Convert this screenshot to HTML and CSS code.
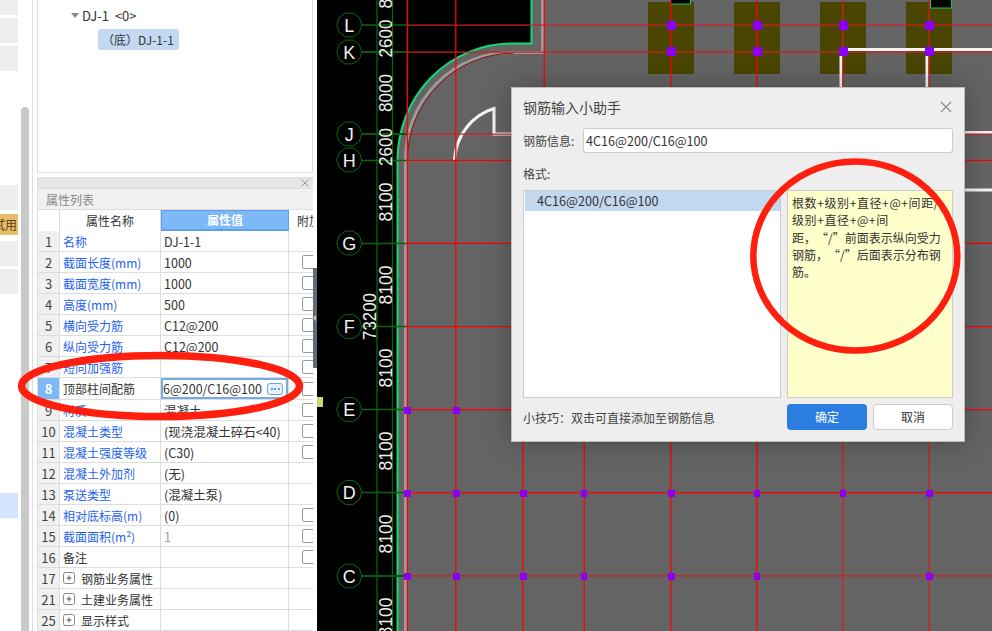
FILE: index.html
```html
<!DOCTYPE html>
<html lang="zh-CN">
<head>
<meta charset="utf-8">
<title>钢筋输入小助手</title>
<link rel="stylesheet" href="styles.css">
</head>
<body>
<div class="app">
  <div class="rail">
    <div class="rail-item rail-a"></div>
    <div class="rail-item rail-b"></div>
    <div class="rail-item rail-b"></div>
    <div class="rail-item rail-c"></div>
    <div class="rail-item rail-trial"><span>试用</span></div>
    <div class="rail-item rail-d"></div>
    <div class="rail-item rail-b"></div>
    <div class="rail-item rail-active"></div>
  </div>
  <div class="scroll"><div class="scroll-thumb"></div></div>
  <div class="divider"></div>
  <div class="main">
    <div class="tree">
      <div class="tree-parent"><span class="tri"></span>DJ-1&nbsp;&nbsp;&lt;0&gt;</div>
      <div class="tree-child">（底）DJ-1-1</div>
    </div>
    <div class="props">
      <div class="props-bar"><svg class="bar-x" width="8" height="8" viewBox="0 0 8 8"><path d="M.5.5l7 7M7.5.5l-7 7"/></svg></div>
      <div class="props-title">属性列表</div>
      <table class="grid">
        <colgroup><col class="c-i"><col class="c-n"><col class="c-v"><col class="c-e"></colgroup>
        <tr class="head"><th class="idx"></th><th>属性名称</th><th class="th-on">属性值</th><th class="th-e">附加</th></tr>
        <tr><td class="idx">1</td><td class="nm">名称</td><td class="val">DJ-1-1</td><td></td></tr>
        <tr><td class="idx">2</td><td class="nm">截面长度(mm)</td><td class="val">1000</td><td class="ck"><i></i></td></tr>
        <tr><td class="idx">3</td><td class="nm">截面宽度(mm)</td><td class="val">1000</td><td class="ck"><i></i></td></tr>
        <tr><td class="idx">4</td><td class="nm">高度(mm)</td><td class="val">500</td><td class="ck"><i></i></td></tr>
        <tr><td class="idx">5</td><td class="nm">横向受力筋</td><td class="val">C12@200</td><td class="ck"><i></i></td></tr>
        <tr><td class="idx">6</td><td class="nm">纵向受力筋</td><td class="val">C12@200</td><td class="ck"><i></i></td></tr>
        <tr><td class="idx">7</td><td class="nm">短向加强筋</td><td class="val"></td><td class="ck"><i></i></td></tr>
        <tr><td class="idx idx-on">8</td><td class="blk">顶部柱间配筋</td><td class="edit"><div class="edit-box"><span class="edit-text">6@200/C16@100</span><span class="dots"><b></b><b></b><b></b></span></div></td><td class="ck"><i></i></td></tr>
        <tr><td class="idx">9</td><td class="nm">材质</td><td class="val">混凝土</td><td class="ck"><i></i></td></tr>
        <tr><td class="idx">10</td><td class="nm">混凝土类型</td><td class="val">(现浇混凝土碎石&lt;40)</td><td class="ck"><i></i></td></tr>
        <tr><td class="idx">11</td><td class="nm">混凝土强度等级</td><td class="val">(C30)</td><td class="ck"><i></i></td></tr>
        <tr><td class="idx">12</td><td class="nm">混凝土外加剂</td><td class="val">(无)</td><td></td></tr>
        <tr><td class="idx">13</td><td class="nm">泵送类型</td><td class="val">(混凝土泵)</td><td></td></tr>
        <tr><td class="idx">14</td><td class="nm">相对底标高(m)</td><td class="val">(0)</td><td class="ck"><i></i></td></tr>
        <tr><td class="idx">15</td><td class="nm">截面面积(m²)</td><td class="val val-calc">1</td><td class="ck"><i></i></td></tr>
        <tr><td class="idx">16</td><td class="blk">备注</td><td class="val"></td><td class="ck"><i></i></td></tr>
        <tr><td class="idx">17</td><td class="blk"><span class="group"><svg class="plus" width="12" height="12" viewBox="0 0 12 12"><rect x=".5" y=".5" width="11" height="11" rx="2"/><path d="M3.5 6h5M6 3.5v5"/></svg>钢筋业务属性</span></td><td class="val"></td><td></td></tr>
        <tr><td class="idx">21</td><td class="blk"><span class="group"><svg class="plus" width="12" height="12" viewBox="0 0 12 12"><rect x=".5" y=".5" width="11" height="11" rx="2"/><path d="M3.5 6h5M6 3.5v5"/></svg>土建业务属性</span></td><td class="val"></td><td></td></tr>
        <tr><td class="idx">25</td><td class="blk"><span class="group"><svg class="plus" width="12" height="12" viewBox="0 0 12 12"><rect x=".5" y=".5" width="11" height="11" rx="2"/><path d="M3.5 6h5M6 3.5v5"/></svg>显示样式</span></td><td class="val"></td><td></td></tr>
      </table>
    </div>
  </div>
  <div class="splitter"><div class="split-handle"><span class="split-tri"></span></div></div>

  <svg class="canvas" width="675" height="631" viewBox="317 0 675 631">
    <defs>
      <polygon id="bubble" points="12.5,0 10.1,7.3 3.9,11.9 -3.9,11.9 -10.1,7.3 -12.5,0 -10.1,-7.3 -3.9,-11.9 3.9,-11.9 10.1,-7.3"/>
    </defs>
    <rect x="317" y="0" width="675" height="631" fill="#000"/>
    <path class="floor" d="M397.500 631V160A114 117 0 0 1 511 43.500H531.500V0H992V631Z"/>

    <g class="olive">
      <rect x="648" y="2" width="46" height="72"/><rect x="734" y="2" width="46" height="72"/>
      <rect x="820" y="2" width="46" height="72"/><rect x="906" y="2" width="46" height="72"/>
    </g>
    <rect class="pit" x="670.500" y="-3" width="20" height="7"/>
    <rect class="pit" x="930.500" y="-3" width="21" height="11"/>

    <path class="band" d="M405.500 631V160A105 107 0 0 1 511 52.500H542.500V0"/>
    <path class="edge" d="M397.500 631V160A114 117 0 0 1 511 43.500H531.500V0"/>
    <path class="arc" d="M407.500 160A107 107 0 0 1 514 53"/>

    <g class="walls">
      <path d="M454.500 160C456 134 473 115 494 108.500V134H515"/>
      <path d="M847 49.500H992M841 55V90M927 55V90M960 132.500H992M960 190H992"/>
    </g>

    <g class="grid-lines">
      <path class="g" d="M377 0V631M392.500 0V631"/>
      <path class="g" d="M361 25H407M361 243.500H407M361 326.500H407M361 409.500H407M361 492.500H407M361 160.500H407"/>
      <path class="g g2" d="M361 52H407M361 134H407M361 576H407"/>
      <path class="r" d="M407.400 0V631M455.800 0V631M544.300 0V90M670.800 0V631M756.800 0V631M522.800 440V631M584.300 440V631"/>
      <path class="d" d="M842.800 0V631M929 0V631"/>
      <path class="d" d="M407 25.200H992M407 52.200H992M407 134.200H992M407 575.800H992"/>
      <path class="r" d="M407 160.400H992M407 243.300H992M407 326.700H992M407 409.700H992M407 492.700H992"/>
    </g>

    <g class="pts-a">
      <rect x="666.500" y="20.500" width="9" height="9"/><rect x="666.500" y="46.500" width="9" height="9"/>
      <rect x="752.500" y="20.500" width="9" height="9"/><rect x="752.500" y="46.500" width="9" height="9"/>
      <rect x="838.500" y="20.500" width="9" height="9"/><rect x="838.500" y="46.500" width="9" height="9"/>
      <rect x="924.500" y="20.500" width="9" height="9"/><rect x="924.500" y="46.500" width="9" height="9"/>
    </g>
    <g class="pts-a">
      <rect x="404" y="406.500" width="7" height="7"/><rect x="452.500" y="406.500" width="7" height="7"/>
      <rect x="404" y="489.500" width="7" height="7"/><rect x="452.500" y="489.500" width="7" height="7"/>
      <rect x="404" y="572.500" width="7" height="7"/><rect x="452.500" y="572.500" width="7" height="7"/>
      <rect x="519.500" y="489.500" width="7" height="7"/><rect x="581" y="489.500" width="6" height="7"/>
      <rect x="667.500" y="489.500" width="7" height="7"/><rect x="753.500" y="489.500" width="6" height="7"/>
      <rect x="839.500" y="489.500" width="6" height="7"/><rect x="925.500" y="489.500" width="7" height="7"/>
      <rect x="519.500" y="572.500" width="7" height="7"/><rect x="581" y="572.500" width="6" height="7"/>
      <rect x="667.500" y="572.500" width="7" height="7"/><rect x="753.500" y="572.500" width="6" height="7"/>
      <rect x="925.500" y="572.500" width="7" height="7"/>
    </g>

    <g class="bubbles">
      <use href="#bubble" x="349.300" y="25"/><use href="#bubble" x="349.300" y="52"/>
      <use href="#bubble" x="349.300" y="134"/><use href="#bubble" x="349.300" y="160"/>
      <use href="#bubble" x="349.300" y="243"/><use href="#bubble" x="349.300" y="326.500"/>
      <use href="#bubble" x="349.300" y="409.500"/><use href="#bubble" x="349.300" y="492.500"/>
      <use href="#bubble" x="349.300" y="576"/>
    </g>
    <g class="axis-letters">
      <text x="349.300" y="31.500">L</text><text x="349.300" y="58.500">K</text>
      <text x="349.300" y="140.500">J</text><text x="349.300" y="166.500">H</text>
      <text x="349.300" y="249.500">G</text><text x="349.300" y="333">F</text>
      <text x="349.300" y="416">E</text><text x="349.300" y="499">D</text>
      <text x="349.300" y="582.500">C</text>
    </g>
    <g class="dims">
      <text transform="translate(391.500 -11) rotate(-90)" textLength="39" lengthAdjust="spacingAndGlyphs">8100</text>
      <text transform="translate(391.500 38.500) rotate(-90)" textLength="38" lengthAdjust="spacingAndGlyphs">2600</text>
      <text transform="translate(391.500 93) rotate(-90)" textLength="38" lengthAdjust="spacingAndGlyphs">8000</text>
      <text transform="translate(391.500 147) rotate(-90)" textLength="38" lengthAdjust="spacingAndGlyphs">2600</text>
      <text transform="translate(391.500 202) rotate(-90)" textLength="39" lengthAdjust="spacingAndGlyphs">8100</text>
      <text transform="translate(391.500 285) rotate(-90)" textLength="39" lengthAdjust="spacingAndGlyphs">8100</text>
      <text transform="translate(391.500 368) rotate(-90)" textLength="39" lengthAdjust="spacingAndGlyphs">8100</text>
      <text transform="translate(391.500 451) rotate(-90)" textLength="39" lengthAdjust="spacingAndGlyphs">8100</text>
      <text transform="translate(391.500 534) rotate(-90)" textLength="39" lengthAdjust="spacingAndGlyphs">8100</text>
      <text transform="translate(391.500 617) rotate(-90)" textLength="39" lengthAdjust="spacingAndGlyphs">8100</text>
      <text transform="translate(376 316.500) rotate(-90)" textLength="47" lengthAdjust="spacingAndGlyphs">73200</text>
    </g>
  </svg>

  <div class="tab-mark"></div>

  <div class="dialog">
    <div class="dlg-title"><span>钢筋输入小助手</span>
      <svg class="dlg-close" width="12" height="12" viewBox="0 0 12 12"><path d="M1 1l10 10M11 1L1 11"/></svg>
    </div>
    <div class="dlg-row">
      <span class="dlg-label">钢筋信息:</span>
      <div class="dlg-input">4C16@200/C16@100</div>
    </div>
    <div class="dlg-format">格式:</div>
    <div class="dlg-body">
      <div class="dlg-list"><div class="dlg-option">4C16@200/C16@100</div></div>
      <div class="dlg-note"><span class="formula">根数+级别+直径+@+间距/</span><br><span class="formula">级别+直径+@+间</span><br>距，“/”前面表示纵向受力<br>钢筋，“/”后面表示分布钢<br>筋。</div>
    </div>
    <div class="dlg-foot">
      <span class="dlg-tip">小技巧：双击可直接添加至钢筋信息</span>
      <div class="btn btn-ok">确定</div>
      <div class="btn btn-no">取消</div>
    </div>
  </div>

  <svg class="marks" width="992" height="631" viewBox="0 0 992 631">
    <ellipse class="mark-row" cx="160.500" cy="386" rx="139" ry="30.500"/>
    <ellipse class="mark-note" cx="855.300" cy="256" rx="102" ry="94.500"/>
  </svg>
</div>
</body>
</html>
```

FILE: styles.css
```css
* { box-sizing: border-box; }
html, body { margin: 0; padding: 0; }
body { background: #fff; font-family: "Noto Sans CJK SC", "Open Sans", sans-serif; font-size: 12px; color: #333; text-spacing-trim: space-all; }

.app { position: relative; display: flex; width: 992px; height: 631px; overflow: hidden; background: #fff; }

/* left rail */
.rail { width: 18px; flex: none; }
.rail-item { background: #eee; height: 25px; margin-top: 3px; }
.rail-a { height: 15px; margin-top: 0; }
.rail-c { margin-top: 114px; }
.rail-trial { height: 21px; margin-top: 4px; background: #e9bb68; color: #5a3c10; overflow: hidden; position: relative; }
.rail-trial span { display: block; width: 24px; margin-left: -7px; line-height: 21px; white-space: nowrap; }
.rail-d { margin-top: 6px; }
.rail-active { margin-top: 199px; background: #d2e5fc; }

.scroll { width: 8px; margin-left: 3px; padding-top: 107px; flex: none; }
.scroll-thumb { height: 100%; background: #c9c9c9; border-radius: 4px 4px 0 0; }
.divider { width: 1px; margin-left: 3px; background: #ddd; flex: none; }

/* main column */
.main { width: 276px; margin-left: 4px; flex: none; display: flex; flex-direction: column; }
.tree { height: 173px; border: 1px solid #ddd; border-top: 0; padding-top: 5px; flex: none; }
.tree-parent { display: flex; align-items: center; height: 20px; padding-left: 33px; font-size: 13px; color: #333; white-space: nowrap; }
.tri { width: 0; height: 0; margin-right: 3px; border: 4px solid transparent; border-top: 5px solid #888; border-bottom: 0; }
.tree-child { width: 81px; height: 21px; margin: 4px 0 0 60px; padding-left: 4px; border-radius: 3px; background: #c2d9f1; font-size: 12px; line-height: 21px; white-space: nowrap; }

.props { margin-top: 4px; flex: 1; min-height: 0; border-left: 1px solid #ddd; overflow: hidden; }
.props-bar { display: flex; justify-content: flex-end; align-items: center; height: 12px; padding-right: 4px; background: #e6e6e6; border-top: 1px solid #ddd; border-bottom: 1px solid #ddd; }
.bar-x { stroke: #999; stroke-width: 1; fill: none; }
.props-title { height: 21px; padding-left: 8px; background: #f0f0f0; color: #888; font-size: 12px; line-height: 21px; border-bottom: 1px solid #ddd; }

.grid { width: 275px; table-layout: fixed; border-collapse: separate; border-spacing: 0; }
.c-i { width: 22px; } .c-n { width: 101px; } .c-v { width: 128px; } .c-e { width: 24px; }
.grid th, .grid td { height: 21px; padding: 0; border-right: 1px solid #ddd; border-bottom: 1px solid #ddd; white-space: nowrap; overflow: hidden; font-weight: 400; text-align: left; }
.grid .head th { height: 20px; text-align: center; border-bottom: 0; border-right-color: #ddd; line-height: 18px; }
.grid .head .th-on { background: #7db8f7; color: #fff; font-weight: 700; border: 1px solid #5ea0ea; border-bottom-width: 2px; }
.grid .head .th-e { text-align: left; padding-left: 8px; border-right: 0; }
.grid td:last-child { border-right: 0; }
.grid .idx { background: #f0f0f0; color: #444; text-align: center; font-size: 13px; }
.grid .head .idx { background: #fff; }
.grid .idx-on { background: #7db8f7; color: #fff; font-weight: 700; }
.nm { padding-left: 3px !important; color: #1e62f0; }
.blk { padding-left: 3px !important; color: #333; }
.val { padding-left: 3px !important; color: #333; font-size: 12.500px; }
.val-calc { color: #86a6cc; }
.ck { padding-left: 13px !important; }
.ck i { display: block; width: 14px; height: 14px; border: 1px solid #999; border-radius: 2px; background: #fff; }
.grid td.edit { overflow: visible; }
.edit-box { display: flex; align-items: center; justify-content: space-between; height: 21px; padding: 0 3px 0 0; border: 2px solid #74abe3; overflow: hidden; font-size: 12.500px; }
.edit-text { white-space: nowrap; }
.dots { display: flex; align-items: center; justify-content: center; gap: 1.500px; flex: none; width: 16px; height: 12px; border: 1px solid #6fa3dd; border-radius: 3px; background: #e8f1fb; }
.dots b { width: 2px; height: 2px; border-radius: 50%; background: #2b7de0; }
.group { display: flex; align-items: center; }
.plus { flex: none; margin-right: 6px; fill: none; stroke: #888; stroke-width: 1; }
.plus path { stroke: #555; }

/* splitter */
.splitter { width: 4px; flex: none; padding-top: 268px; }
.split-handle { display: flex; align-items: center; height: 100px; background: #5f6a72; }
.split-tri { width: 0; height: 0; border: 3px solid transparent; border-left: 0; border-right: 3px solid #c8ced2; }

/* canvas */
.canvas { flex: none; display: block; margin-left: 0; }
.floor { fill: #646464; }
.olive rect { fill: #4a4500; }
.pit { fill: #000; stroke: #0fc86a; stroke-width: 1; }
.band { fill: none; stroke: #9a9a9a; stroke-width: 3; }
.edge { fill: none; stroke: #0fdc78; stroke-width: 2; }
.arc { fill: none; stroke: #8b1010; stroke-width: 1; }
.walls path { fill: none; stroke: #f4f4f4; stroke-width: 3; }
.grid-lines path { fill: none; stroke-width: 1.300; }
.grid-lines .g { stroke: #0b640b; }
.grid-lines .g2 { stroke: #0a5a0a; stroke-width: 2; }
.grid-lines .r { stroke: #f00; }
.grid-lines .d { stroke: #d02020; }
.pts-a rect { fill: #8a00f5; shape-rendering: crispEdges; }
.bubbles use { fill: #000; stroke: #0b6b0b; stroke-width: 1; }
.axis-letters text { fill: #f0f0f0; font-family: "Liberation Sans", sans-serif; font-size: 18px; text-anchor: middle; }
.dims text { fill: #eee; font-family: "Liberation Sans", sans-serif; font-size: 19px; text-anchor: middle; }

.tab-mark { position: absolute; left: 317px; top: 397px; width: 6px; height: 10px; background: #c6da70; }

/* dialog */
.dialog { position: absolute; left: 511px; top: 87px; width: 454px; height: 355px; display: flex; flex-direction: column; padding: 0 11px; background: #eee; border: 1px solid #bcbcbc; box-shadow: 0 0 26px rgba(0, 0, 0, .3); color: #444; }
.dlg-title { display: flex; align-items: center; justify-content: space-between; height: 40px; padding: 0 1px 2px 0; font-size: 14px; flex: none; }
.dlg-close { fill: none; stroke: #888; stroke-width: 1.100; }
.dlg-row { display: flex; align-items: center; height: 25px; flex: none; }
.dlg-label { width: 60px; flex: none; }
.dlg-input { flex: 1; height: 25px; padding-left: 2px; background: #fff; border: 1px solid #ccc; border-radius: 3px; color: #333; font-size: 12.600px; line-height: 23px; }
.dlg-format { height: 37px; padding-top: 12px; line-height: 18px; flex: none; }
.dlg-body { display: flex; gap: 6px; height: 208px; flex: none; }
.dlg-list { width: 258px; padding: 0 0 0 1px; background: #fff; border: 1px solid #ccc; }
.dlg-option { height: 20px; padding-left: 12px; background: #c2d8ef; font-size: 12.600px; line-height: 20px; color: #333; }
.dlg-note { flex: 1; padding: 3px 0 0 4px; background: #ffc; border: 1px solid #ccc; color: #333; line-height: 17.330px; white-space: nowrap; overflow: hidden; }
.formula { letter-spacing: .6px; }
.dlg-foot { display: flex; align-items: center; gap: 6px; height: 26px; margin-top: 6px; flex: none; }
.dlg-tip { flex: 1; }
.btn { width: 80px; height: 26px; border-radius: 4px; text-align: center; line-height: 26px; }
.btn-ok { background: #2b7de0; color: #fff; }
.btn-no { background: #fff; border: 1px solid #ccc; line-height: 24px; color: #333; }

/* hand-drawn markup on the screenshot */
.marks { position: absolute; left: 0; top: 0; pointer-events: none; }
.marks ellipse { fill: none; stroke: #ff1f0f; }
.mark-row { stroke-width: 7.500; }
.mark-note { stroke-width: 6.500; }
```
